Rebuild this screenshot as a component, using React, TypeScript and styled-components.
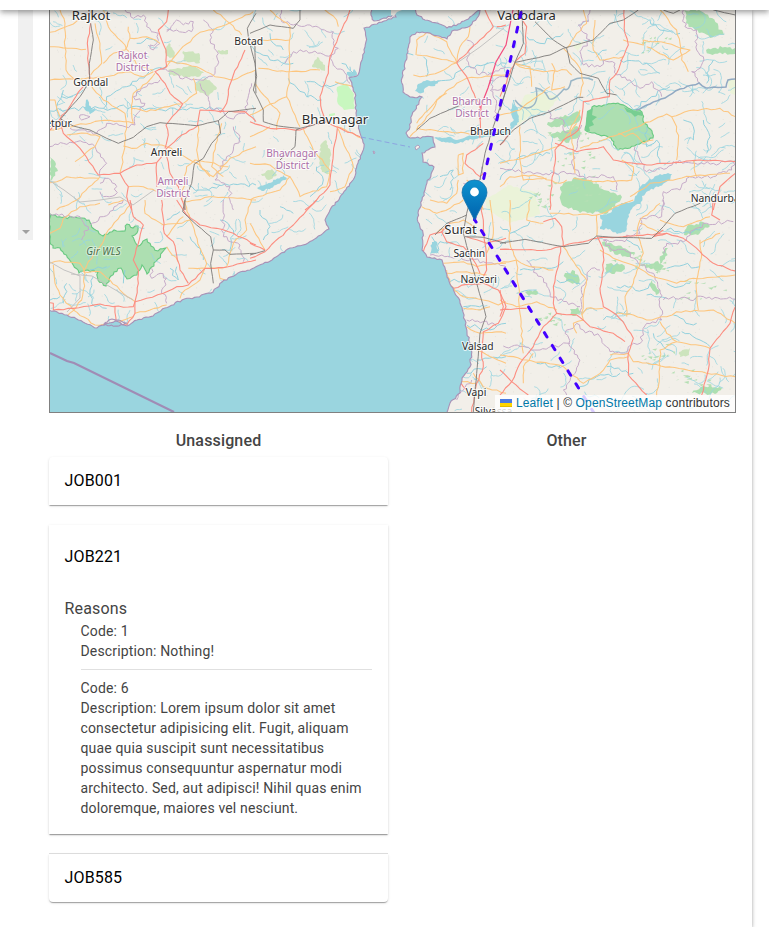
import React from "react";
import styled, { createGlobalStyle } from "styled-components";

const GlobalStyle = createGlobalStyle`
  html, body { margin: 0; background: #fff; overflow: hidden; }
  body { font-family: Roboto, sans-serif; color: #444; }
  * { box-sizing: border-box; }
`;

const Page = styled.div`
  height: 927px;
  width: 769px;
  display: flex;
  flex-direction: column;
  overflow: hidden;
`;

const TopBar = styled.header`
  position: relative;
  z-index: 2;
  flex: 0 0 10px;
  background: #fff;
  box-shadow: 0 2px 4px -1px rgba(0, 0, 0, 0.2), 0 4px 5px 0 rgba(0, 0, 0, 0.14),
    0 1px 10px 0 rgba(0, 0, 0, 0.12);
`;

const Sheet = styled.main`
  flex: 1;
  width: 752px;
  padding-left: 18px;
  display: flex;
  align-items: flex-start;
  gap: 16px;
  background: #fff;
  box-shadow: 0 2px 1px -1px rgba(0, 0, 0, 0.2), 0 1px 3px 0 rgba(0, 0, 0, 0.24),
    0 1px 5px 0 rgba(0, 0, 0, 0.16);
`;

const ScrollTrack = styled.div`
  width: 15px;
  height: 230px;
  padding-bottom: 6px;
  display: flex;
  align-items: flex-end;
  justify-content: center;
  background: #f0f0f0;
`;

const ScrollArrow = styled.div`
  border: 4px solid transparent;
  border-top-color: #a0a0a0;
  border-bottom: 0;
`;

const Content = styled.div`
  width: 687px;
`;

const MapFrame = styled.div`
  position: relative;
  height: 403px;
  border: 1px solid #808080;
  border-top: 0;
  overflow: hidden;
`;

const MapCanvas = styled.svg`
  display: block;
  width: 685px;
  height: 402px;
  font-family: "Noto Sans", sans-serif;
`;

const Attribution = styled.div`
  position: absolute;
  right: 0;
  bottom: 0;
  padding: 0 5px;
  background: rgba(255, 255, 255, 0.8);
  color: #333;
  font: 12px/17px "Liberation Sans", Arial, sans-serif;
  letter-spacing: 0.14px;
  white-space: pre;
`;

const AttributionLink = styled.a`
  color: #0078a8;
`;

const Flag = styled.svg`
  width: 12px;
  height: 8px;
  margin-right: 4px;
`;

const Columns = styled.div`
  display: grid;
  grid-template-columns: 339px 339px;
  column-gap: 9px;
  padding-top: 15px;
`;

const ColumnTitle = styled.h2`
  margin: 0 0 4px;
  height: 25px;
  font-size: 16px;
  line-height: 25px;
  font-weight: 500;
  letter-spacing: 0.15px;
  text-align: center;
`;

const Card = styled.section<{ $top?: boolean; $bottom?: boolean; $ruled?: boolean }>`
  position: relative;
  background: #fff;
  padding: 0 16px 0 15.5px;
  border-radius: ${(p) => (p.$top ? "4px 4px" : "0 0")} ${(p) => (p.$bottom ? "4px 4px" : "0 0")};
  box-shadow: 0 2px 1px -1px rgba(0, 0, 0, 0.2), 0 1px 1px 0 rgba(0, 0, 0, 0.14),
    0 1px 3px 0 rgba(0, 0, 0, 0.12);
  & + & { margin-top: 20px; }
  &::before {
    content: "";
    display: ${(p) => (p.$ruled ? "block" : "none")};
    position: absolute;
    inset: -1px 0 auto;
    height: 1px;
    background: #dcdcdc;
  }
`;

const CardTitle = styled.div<{ $open?: boolean }>`
  height: ${(p) => (p.$open ? 64 : 48)}px;
  display: flex;
  align-items: center;
  color: #000;
  font-size: 16px;
  line-height: 24px;
  letter-spacing: 0.15px;
`;

const Details = styled.div`
  padding: 8px 0 16px;
`;

const DetailsTitle = styled.div`
  font-size: 16px;
  line-height: 24px;
  letter-spacing: 0.15px;
`;

const Reason = styled.div`
  margin-left: 16px;
  font-size: 14px;
  line-height: 20px;
  letter-spacing: 0.01071em;
  & + & {
    margin-top: 8px;
    padding-top: 8px;
    border-top: 1px solid #e0e0e0;
  }
`;

/* ---- Map geometry ---- */

type Pt = [number, number];

const parse = (s: string): Pt[] => s.trim().split(/\s+/).map((p) => p.split(",").map(Number) as Pt);

const random = (seed: number) => {
  let a = seed;
  return () => {
    a = (a * 1664525 + 1013904223) % 4294967296;
    return a / 4294967296;
  };
};

/** Subdivides a polyline and displaces the new vertices to give it a natural edge. */
const rough = (src: string, amp: number, step: number, seed: number, close = false) => {
  const r = random(seed * 977 + 13);
  const pts = parse(src);
  if (close) pts.push(pts[0]);
  let d = `M${pts[0]}`;
  for (let i = 1; i < pts.length; i++) {
    const [x0, y0] = pts[i - 1];
    const [x1, y1] = pts[i];
    const len = Math.hypot(x1 - x0, y1 - y0) || 1;
    const n = Math.max(1, Math.round(len / step));
    for (let k = 1; k <= n; k++) {
      const o = k === n ? 0 : (r() - 0.5) * 2 * amp;
      const t = k / n;
      d += `L${(x0 + (x1 - x0) * t - ((y1 - y0) / len) * o).toFixed(1)},${(y0 + (y1 - y0) * t + ((x1 - x0) / len) * o).toFixed(1)}`;
    }
  }
  return close ? d + "Z" : d;
};

const WEST_COAST =
  "371,8 371,15 374,21 384,18 395,15 396,17 384,21 377,24 364,28 366,37 365,47 362,60 358,75 349,78 355,93 356,113 360,133 364,147 358,163 353,180 340,197 330,210 325,220 329,229 308,243 290,248 272,260 250,270 240,272 222,282 213,292 197,297 182,300 165,308 153,316 137,320 127,326 115,321 104,325 97,328 83,322 67,315 49,310";
const EAST_COAST =
  "447,414 450,403 460,393 462,378 470,367 472,347 467,333 465,320 460,303 453,288 447,277 442,260 427,257 422,250 423,233 418,222 418,213 422,200 427,183 434,167 423,162 422,153 435,147 433,137 410,138 406,133 410,127 412,115 422,97 410,97 403,92 402,78 407,57 410,37 417,32 430,33 447,39 452,31 462,28 470,26 477,18 481,8 474,14 466,20 458,24 447,28 437,23 425,20 417,15 414,8";

interface Layer {
  x: number;
  y: number;
  minor: string[];
  major: string[];
  rail: string[];
  border: string[];
  water: string[];
}

/* Each sector holds its lines at three units per map pixel. */
const SECTORS: Layer[] = [
  {
    x: 0, y: 0,
    minor: [
      "180,30 195,70 195,140 198,210 225,240", "150,97 220,72 280,30", "150,140 215,145 258,148", "285,70 300,130 305,190 272,225",
      "310,30 325,80 375,135 410,195 460,210", "310,190 340,160 375,150 390,115 385,80", "390,115 440,110 480,130", "500,200 540,150 600,97 640,90 690,68 760,35",
      "640,30 690,70 725,105", "500,185 545,190 590,200 645,230 700,240 768,210", "460,215 430,230 380,215 330,228 280,235 150,240", "272,255 310,300 375,340 380,372 365,500 360,518",
      "395,330 400,280 440,250 465,220", "550,310 590,280 580,235", "150,390 215,380 300,362 372,365 400,370 395,325 440,335 545,312", "200,405 260,400 300,410 285,440 225,485",
      "370,438 410,445 440,430 500,440 590,490 640,530 690,475 768,440", "595,375 590,450 600,500 630,530", "665,370 640,460 635,500 670,530", "150,548 170,545 200,530 295,535",
      "300,530 285,545 230,600 170,630", "545,600 560,500 585,480 685,500", "550,605 640,590 768,600", "385,560 430,560 470,575", "150,300 165,300 180,350",
    ],
    major: [
      "272,70 262,130 265,190 270,235 245,265 212,315 180,357 150,390", "180,357 190,400 240,445 295,525 360,520 410,495 470,488 500,445 545,405 592,378 600,330 660,335 735,335 768,365",
      "505,30 500,65 475,90 485,120 498,150 500,200 465,215 495,250 510,280 548,312 498,375 505,405 495,445", "360,520 385,560 380,590 395,630", "500,470 510,520 535,560 550,610 555,630",
      "735,150 700,225 685,270 680,310 660,337", "470,488 470,560",
    ],
    rail: [
      "272,70 280,120 268,190 268,245 240,290 182,357", "182,357 220,378 270,390 320,415 355,430 400,412 440,380 480,368 590,377 655,362 685,335 768,325", "655,362 662,400 635,430 610,475 583,492 575,550 555,600 555,630",
      "768,40 742,85 745,110 765,140 768,280",
    ],
    border: [
      "375,30 400,55 430,45 440,80 475,100 470,130 450,135 460,150 480,130", "500,90 530,60 550,75 580,65 575,95 530,90 500,95", "610,60 640,90 630,120 655,160 645,220 600,240 540,235 520,215 480,205", "600,250 625,290 630,325 670,330 690,355 735,340 755,250",
      "480,240 440,260 400,290 435,310 408,345 405,375 375,380 350,370 320,370 290,400 210,385", "150,440 190,430 230,425 285,440 320,490 300,510 300,530", "700,380 720,410 700,450 680,470 660,500 645,540 690,560 690,600 700,630", "240,345 270,350 245,360 240,345",
      "300,550 325,535 350,560 345,585 310,590 300,575",
    ],
    water: ["150,333 200,330 260,325 310,325 395,320 460,325 560,330 665,325", "310,325 320,290 380,260 440,225 500,195", "190,270 170,320 175,350", "640,550 700,552 768,555", "540,545 600,570 660,555", "260,300 270,340 285,325", "410,130 440,115 470,125", "250,270 200,295 185,290"],
  },
  {
    x: 250, y: 0,
    minor: [
      "60,30 120,80 118,250 110,290 0,345", "0,120 120,120", "25,205 110,215 210,210", "15,250 60,310 90,340 80,390", "110,290 140,360 150,380", "225,30 260,60 265,80", "255,245 310,260", "260,380 290,450 310,500 285,560 240,575",
      "498,165 500,120 530,97 590,125 620,188 560,175 500,165", "620,188 570,215 510,230 490,225", "620,188 630,140 655,110 660,80", "500,385 580,395 700,405", "500,370 560,300 620,250 650,235 768,225", "480,410 540,340 570,290 590,280",
      "0,490 60,495 120,530 90,570 0,600", "120,530 150,590 230,560 240,510 190,450 160,385", "540,600 590,610 620,580 625,540", "625,465 640,460 640,520 625,525 625,465", "650,540 690,580 700,630", "0,410 60,380",
      "260,380 310,400 335,415",
    ],
    major: [
      "300,30 290,60 265,110 240,170 235,220 210,290 215,330 230,365", "0,365 60,385 150,390 180,375 230,365 280,390 330,410", "262,385 250,460 240,555 200,600 165,630", "705,30 730,80 680,130 620,188", "768,75 740,80",
      "700,430 650,465 645,490 690,530 700,520", "620,188 650,230 690,320 690,415",
    ],
    rail: ["150,30 150,60 130,85 60,75 0,100", "0,130 15,190 20,230 10,270 40,330 40,365 85,378 150,385 230,365", "150,385 138,390 135,440 90,480", "500,390 540,355 620,320 690,295", "768,270 730,380 705,460 690,540"],
    border: [
      "95,30 95,65 130,75 180,75 250,95 250,130 265,145 245,165 160,155 130,155 105,190", "245,165 250,195 290,225 300,250", "650,120 670,130 650,180 680,220 730,220 768,200", "768,230 720,240 725,270 768,260", "720,270 740,310 735,360", "695,500 690,540 640,550",
    ],
    water: ["0,135 60,180 130,190", "115,235 170,290 215,300", "170,245 240,260 290,240", "60,100 70,130 100,150", "275,190 310,220 300,200", "470,160 490,165", "530,230 530,180 520,170", "550,250 600,240 640,210 680,195 768,190", "570,530 610,510 600,570", "200,500 220,540 180,590"],
  },
  {
    x: 500, y: 0,
    minor: [
      "285,60 280,150 300,180 370,170", "200,145 230,100 260,70 250,30", "190,145 240,205 250,250 240,290", "45,190 90,200 95,260", "45,190 75,205 130,215 200,210 215,225", "155,190 165,210 155,270 195,260", "370,120 430,135 430,120 500,130 570,150 520,180 440,140",
      "480,30 530,90 540,130 545,180 565,215", "0,345 60,330 150,260", "60,380 60,480 70,540 140,535", "0,490 70,475 110,460 170,440", "175,440 230,370", "240,330 210,390 220,440 225,520", "240,445 330,410 400,385 500,342 515,350 530,380 535,420 530,480", "515,350 580,330 660,325 706,350",
      "355,400 375,410 400,400 430,430 460,420", "365,480 400,500 395,540 280,545 220,535", "0,560 30,530 100,525 180,550 200,540", "580,480 590,530", "390,590 450,550 600,525 690,520",
    ],
    major: [
      "50,30 80,80 75,160 45,185 30,220 0,290", "372,30 375,100 385,135 350,220 330,240 328,290 250,305 245,355 235,390 190,420 165,450 165,490 155,545 150,630", "165,430 230,455 310,440 340,480 440,495 500,490 600,480 706,485", "706,520 660,560 640,630", "0,435 30,400",
    ],
    rail: ["105,65 160,120 200,145 210,190 240,220 295,235 320,280 350,285", "45,187 150,165 190,145 280,120 330,70 370,60 415,30", "65,30 70,130 45,187 0,330", "0,435 40,390 90,355 150,335 190,315 235,292 250,292", "490,30 520,40 540,30", "640,30 706,45"],
    border: [
      "270,30 265,65 235,75 270,120 240,155 250,195 300,200 310,180 345,190 350,225 390,240 420,265 455,245 485,290", "550,30 555,80 590,90 590,150 610,170 600,205 575,215 600,250", "145,330 150,355 190,360 190,390 215,400 245,375", "240,405 215,490 240,530 210,520 120,520 0,505",
      "405,440 420,480 440,515 500,505 520,485 640,490 700,485 695,510 640,530 560,535 540,570 490,575 490,630", "240,530 340,530 350,570",
    ],
    water: ["0,400 50,370 40,300", "80,110 120,130 190,100", "290,170 320,150", "350,285 400,330 455,290 510,260", "450,60 480,90 540,100", "440,380 440,440 470,420 480,490", "610,360 630,410 620,460", "0,540 60,470 150,460", "640,180 620,220 620,250", "360,180 440,190 480,220", "550,360 580,380 580,420"],
  },
  {
    x: 0, y: 200,
    minor: [
      "150,100 180,85 190,55 240,20 300,10", "325,90 390,15", "150,190 180,182 240,190 255,220 250,270 245,300 200,350", "160,195 165,250 180,285 220,330 285,375 340,370 400,350", "330,240 370,280 405,305", "435,0 435,40 490,75 545,70 570,60 555,10",
      "500,110 530,70 550,50", "570,60 600,145 620,190 600,240 545,280 540,295", "565,205 620,205 680,200", "680,200 700,130 740,90 735,60 755,0", "405,340 450,330 500,315", "655,205 660,235 690,245",
      "535,185 500,140", "325,15 370,0", "325,90 300,140 265,185 250,215 300,215 330,240",
    ],
    major: [
      "390,0 400,50 430,75 415,130 400,180 415,210 415,250 405,305 400,320 340,320 300,312 220,325 160,330 160,310 150,308", "345,320 348,370 380,375 405,340 405,305 440,295 490,280 530,260 565,255 615,205 670,203 768,180", "485,0 493,100 520,125 530,165 540,210 565,250", "530,0 560,45 600,75 650,85 700,100 768,135",
    ],
    rail: ["555,0 548,35 590,75 632,110 640,150 632,190 640,250", "640,150 675,150 690,163 768,160"],
    border: ["270,75 310,50 370,0", "150,42 240,50 265,80 245,120", "455,205 455,235 480,220 500,235 485,270 500,310", "670,0 670,110 720,135 730,185"],
    water: ["150,300 180,290", "280,230 270,270 275,310 320,325", "510,205 535,240 530,200", "375,210 370,250", "200,250 190,310", "320,200 270,210", "570,110 610,170 610,180", "660,60 700,90 690,150", "540,35 500,60"],
  },
  {
    x: 250, y: 200,
    minor: [
      "0,70 45,150", "515,20 560,40 600,25 640,0", "560,100 600,70 640,60 680,80", "580,190 640,185 680,200 768,190", "590,220 650,215 710,225", "610,270 640,290 700,300 745,315 768,305", "640,325 690,330 720,320", "650,380 690,400 740,395 768,400", "660,440 768,490", "670,520 700,560 768,580", "610,540 680,550",
      "720,0 730,100 710,160", "590,210 600,255 615,270",
    ],
    major: ["200,0 130,75 45,155 0,175", "0,130 45,150", "690,0 700,60 705,130 710,210 700,230", "600,70 575,95 590,125 640,140 670,180 690,220", "610,265 650,253 700,250 745,270 768,320 745,370 700,395 695,460 700,500 680,550 665,636", "520,155 540,105 580,95", "650,110 710,130 768,115", "650,515 630,545 650,570"],
    rail: ["660,0 650,40 640,100 670,210 708,350 690,400 680,520 670,636", "645,110 700,112 768,130", "555,105 590,70 650,45", "0,165 45,152"],
    border: ["540,165 620,170 700,185 768,200", "650,360 700,365 740,380", "665,540 640,570 620,600"],
    water: ["565,160 545,110", "560,160 570,125 610,130", "600,245 640,240 690,225", "640,320 700,315", "650,375 720,390 768,370", "670,430 720,450", "680,480 768,470", "30,30 60,80 40,120", "90,20 130,40", "650,520 710,500"],
  },
  {
    x: 500, y: 200,
    minor: [
      "30,0 30,130 50,190 60,340 70,460", "90,0 80,60 130,70", "0,190 50,180 90,200 160,210", "150,40 290,45 290,110", "290,45 400,0", "190,140 230,200 260,240 245,340", "300,150 340,175 410,200 460,230", "0,300 50,320 110,305 170,330", "415,110 430,160 400,250 375,290 380,350", "480,10 420,60 410,110",
      "420,70 480,100", "460,230 530,250 580,235 706,225", "600,120 605,160 590,240 595,330", "350,340 400,345 440,360 500,350 530,335 640,330 706,370", "480,365 500,400 530,425 630,445", "530,425 480,450 480,500 470,590", "0,465 80,480 190,500 210,520 250,550 300,520 330,480 385,470",
      "245,340 250,360 220,370 230,400", "330,465 385,460 400,485 620,520 706,530", "245,345 260,325 310,325", "480,60 550,80 630,50", "600,130 660,100", "100,460 70,500 70,550",
    ],
    major: [
      "0,148 140,150 180,140 290,115 400,108 500,100 550,115 600,155 640,190 706,213", "190,140 185,80 165,55 130,65", "182,140 175,200 160,260 160,310 170,340 130,380 100,440 60,490 35,545 0,585", "292,110 310,150 310,210 300,265 310,320 350,345 375,375 400,415 385,460 385,525 440,585", "170,340 230,345 270,380 340,400 375,425",
      "500,100 460,110 490,90", "640,0 635,45 660,60", "706,320 690,370 630,445 625,510 605,585", "0,510 35,545 85,585", "0,350 10,320 0,270", "0,330 80,325",
    ],
    rail: ["0,130 75,118 190,140 265,130 290,108 345,112 455,115 490,80 525,40 600,10"],
    border: [
      "490,0 485,50 420,55 420,100 380,105 375,125 310,120 330,145 380,155 410,180 465,230 480,270 485,360 440,370 420,430 385,440 380,460 330,455 300,410 250,390 230,370 195,400 210,440 240,480 225,520 190,570 200,585",
      "490,160 500,130 550,125 580,90 620,70 700,65", "490,300 520,290 570,300 610,290 706,298", "80,180 110,220 140,250 150,290 240,320", "10,438 60,440 120,450 210,430", "245,340 245,260 275,205 300,210",
    ],
    water: ["60,210 140,205 190,185", "0,80 30,100 90,65", "500,90 560,95 600,90", "500,205 550,195 600,200", "500,250 540,260 570,250", "440,285 500,295", "545,395 600,420 630,440", "460,400 490,440 520,455", "520,345 580,375 590,370", "350,260 430,270 450,250", "310,360 380,330", "50,280 110,270", "240,560 290,530 360,520", "320,500 400,520", "180,500 110,490", "170,240 240,250", "380,120 420,150"],
  },
];

const FORESTS = [
  { s: "50,214 57,217 80,218 89,220 94,229 103,236 114,230 125,231 127,224 133,228 138,226 137,233 132,236 138,246 147,239 151,246 158,251 166,248 158,259 147,274 142,265 137,275 127,279 121,268 114,272 106,286 98,280 98,272 88,270 79,273 72,263 60,248 53,248 50,242", edge: true },
  { s: "592,107 618,103 630,109 642,112 643,121 652,131 653,138 630,148 618,150 611,138 592,133 585,130 587,119", edge: true },
  { s: "50,157 56,164 58,171 50,181", edge: false },
  { s: "684,10 699,10 712,18 724,35 710,38 695,30 686,23", edge: false },
  { s: "706,50 725,47 735,48 735,54 710,54", edge: false },
  { s: "560,187 575,177 590,180 604,190 622,197 608,213 580,213 562,205", edge: false },
  { s: "548,122 563,117 580,112 580,120 567,126 549,126", edge: false },
  { s: "550,135 568,130 577,126 582,134 566,143", edge: false },
  { s: "565,273 575,271 579,277 577,285 566,281", edge: false },
  { s: "602,242 623,248 635,252 630,257 610,252", edge: false },
  { s: "606,264 622,264 625,269 612,274 605,273", edge: false },
  { s: "646,264 658,261 664,266 658,271 646,268", edge: false },
  { s: "687,226 703,222 710,226 698,235 684,235", edge: false },
  { s: "662,252 668,248 665,259 660,264", edge: false },
  { s: "652,280 660,290 656,295 650,286", edge: false },
  { s: "525,292 535,290 538,294 529,296", edge: false },
  { s: "570,309 578,307 581,312 573,316", edge: false },
  { s: "692,393 703,386 722,388 715,394", edge: false },
];

const WOODS = [
  "165,51 169,43 174,51 174,58 166,56", "183,51 199,53 200,63 184,61", "168,70 195,66 204,73 197,77 170,75", "195,84 206,78 217,88 209,96 195,90", "217,51 228,50 228,54 220,54",
  "321,144 326,140 331,153 329,174 322,172 319,159", "261,174 272,169 277,175 269,180", "312,67 317,57 325,65 325,71", "679,352 690,348 689,355 680,357",
];

const LIGHT = ["337,87 347,84 354,94 354,109 344,110 338,104", "515,115 525,95 540,92 559,97 549,110 530,116 518,126", "485,200 508,185 535,192 540,214 510,223 488,210", "329,114 335,113 335,115 329,116", "573,45 583,41 578,52", "728,80 735,79 735,95 730,93"];

const LAKES = [
  "614,207 624,203 632,202 637,195 641,186 648,181 660,174 672,174 670,180 660,186 648,191 642,196 641,202 633,207 630,213 627,222 626,231 617,234 610,229 600,229 602,222 600,215 610,213",
  "84,108 87,99 91,109 97,110 90,114", "257,188 267,184 284,175 287,179 276,185 264,191",
  "415,91 418,84 425,81 440,81 435,86 427,87 422,93", "434,138 448,137 457,140 468,136 490,133 510,131 510,134 490,136 470,139 455,144 440,141", "432,242 437,242 438,252 430,254",
  "513,102 518,110 519,122 514,127 511,130 510,125 514,120 511,110", "347,72 353,73 354,69 357,75 349,78",
];

const LABELS: [string, number, number, number, string?][] = [
  ["Rajkot", 91, 20, 13.1], ["Vadodara", 526.5, 20, 13], ["Botad", 248.7, 45, 10.3], ["Gondal", 90.8, 86, 10.3], ["Jetpur", 57, 127, 10.3],
  ["Amreli", 166.5, 156, 10.3], ["Bhavnagar", 335, 123.5, 13], ["Bharuch", 490.5, 135, 10.3], ["Surat", 460.5, 233.7, 13], ["Sachin", 469.3, 257, 10.3],
  ["Navsari", 478.7, 282.5, 10.3], ["Valsad", 477.8, 350, 10.3], ["Vapi", 476, 396, 10.3], ["Silvassa", 493.5, 414.5, 10.3], ["Nandurbar", 717.3, 202, 10.3],
  ["Rajkot", 132.5, 59, 10.1, "#ac6fa8"], ["District", 132.5, 71, 10.1, "#ac6fa8"], ["Amreli", 173, 185, 10.1, "#ac6fa8"], ["District", 173, 197, 10.1, "#ac6fa8"],
  ["Bhavnagar", 292, 157, 10.1, "#ac6fa8"], ["District", 292.5, 169, 10.1, "#ac6fa8"], ["Bharuch", 472, 105, 10.1, "#ac6fa8"], ["District", 472, 117, 10.1, "#ac6fa8"],
];

/** Short seasonal streams spread across the land. */
const streams = () => {
  const r = random(4242);
  let d = "";
  for (let i = 0; i < 700; i++) {
    let x = 45 + r() * 690;
    let y = 8 + r() * 405;
    if (x > 360 && x < 405) continue;
    let a = (x > 430 ? 0.1 : 0.7) + (r() - 0.5) * 2.2;
    d += `M${x.toFixed(1)},${y.toFixed(1)}`;
    const n = 3 + Math.floor(r() * (x > 480 ? 9 : 5));
    for (let k = 0; k < n; k++) {
      a += (r() - 0.5) * 1.3;
      x += Math.cos(a) * 2.6;
      y += Math.sin(a) * 2.6;
      d += `L${x.toFixed(1)},${y.toFixed(1)}`;
    }
  }
  return d;
};

const specks = () => {
  const r = random(99);
  let d = "";
  for (let i = 0; i < 1500; i++) d += `M${(50 + r() * 685).toFixed(1)},${(10 + r() * 402).toFixed(1)}h1`;
  return d;
};

const scrub = () => {
  const r = random(731);
  const spots = [[575, 190, 30], [565, 130, 22], [575, 160, 18], [655, 352, 18], [685, 380, 22], [650, 270, 18], [625, 255, 18], [550, 320, 14], [700, 290, 24], [655, 45, 16], [540, 200, 15]];
  return spots.flatMap(([cx, cy, s]) =>
    Array.from({ length: 14 }, () => {
      const x = cx + (r() - 0.5) * 2 * s;
      const y = cy + (r() - 0.5) * s;
      return `M${x.toFixed(1)},${y.toFixed(1)}l${(2 + r() * 4).toFixed(1)},${(-r() * 2).toFixed(1)}l${(-r() * 2).toFixed(1)},${(1 + r() * 2).toFixed(1)}z`;
    })
  ).join("");
};

type LineKind = "minor" | "major" | "rail" | "border" | "water";

const Lines = ({ kind, color, width, amp, step }: { kind: LineKind; color: string; width: number; amp: number; step: number }) => (
  <g fill="none" stroke={color} strokeWidth={width * 3} strokeLinejoin="round">
    {SECTORS.map((s, i) => (
      <g key={i} transform={`translate(${s.x} ${s.y}) scale(0.33333)`}>
        {s[kind].map((line, k) => (
          <path key={k} d={rough(line, amp, step, i * 50 + k + 1)} />
        ))}
      </g>
    ))}
  </g>
);

const RegionMap = () => {
  const west = rough(WEST_COAST, 0.9, 2.5, 5);
  const east = rough(EAST_COAST, 0.9, 2.5, 8);
  return (
    <MapCanvas viewBox="50 10 685 402" role="img" aria-label="Map">
      <defs>
        <linearGradient id="pin" x1="0" y1="0" x2="0" y2="1">
          <stop offset="0" stopColor="#0e93cf" />
          <stop offset="1" stopColor="#0062ad" />
        </linearGradient>
      </defs>
      <rect x="49" y="9" width="690" height="406" fill="#f2efe9" />
      <path d={specks()} stroke="#e5e4de" strokeWidth="1" />
      {LIGHT.map((s, i) => <path key={i} d={rough(s, 0.8, 3, i + 3, true)} fill={i === 0 || i === 3 ? "#c8f7bf" : "#ebf3d9"} />)}
      {WOODS.map((s, i) => <path key={i} d={rough(s, 1, 2, i + 6, true)} fill="#cde4bd" />)}
      {FORESTS.map((f, i) => (
        <path key={i} d={rough(f.s, f.edge ? 1.2 : 1.7, 2.5, i + 9, true)} fill="#addfb1" stroke={f.edge ? "#69c982" : "none"} strokeWidth="1.1" />
      ))}
      <path d={scrub()} fill="#b5dfb4" />
      <path d="M585,131l2,-20l6,-3l-1,7l5,2l-5,4l2,4l-5,2l1,4zM624,107l6,3l12,2v4l-4,-1l-3,2l-4,-4l-4,-1z" fill="#77ce91" />
      <path d={streams()} fill="none" stroke="#98d4df" strokeWidth="0.8" />
      <Lines kind="water" color="#8dcfdc" width={0.95} amp={7} step={12} />
      {LAKES.map((s, i) => <path key={i} d={rough(s, 1.1, 2, i + 30, true)} fill="#99d5df" />)}
      <Lines kind="border" color="#c6abc9" width={1} amp={6} step={9} />
      <path d="M515,100Q523,111 531,107T536,88Q545,90 548,97T564,89Q569,92 571,81Q582,75 593,80" fill="none" stroke="#9bb6c6" strokeWidth="1.5" />
      <path d={rough("636,110 650,104 665,98 680,89 699,83 706,88 726,87 728,80 735,79", 0.7, 4, 60)} fill="none" stroke="#91a9c3" strokeWidth="1.5" />
      <Lines kind="minor" color="#fdc67f" width={1.05} amp={2.8} step={14} />
      <g fill="none" stroke="#c4c3c2" strokeWidth="1">
        <path d="M50,181L64,190L80,202L100,200L120,197L133,205L154,190M50,262L64,270L80,276L80,298L67,312M71,274L92,276L112,288L133,300M457,63L480,47L504,28" />
      </g>
      <Lines kind="major" color="#fc8d80" width={1.1} amp={2} step={15} />
      <path d="M513,10L506,45L496,62L488,88L481,106L480,119" fill="none" stroke="#f34c7e" strokeWidth="1.2" />
      <Lines kind="rail" color="#827f7d" width={0.95} amp={0.7} step={18} />
      <path d={`${west} L49,414 L447,414 ${east.replace("M", "L")}Z`} fill="#9ad5df" />
      <g fill="none" stroke="#a891b6" strokeWidth="1.1">
        <path d={west} />
        <path d={east} />
        <path d={rough("104,324 112,319 127,323 119,326 104,325", 0.7, 2, 18, true)} />
      </g>
      <path d="M391,10v5l3,1l3,-4l5,-2z" fill="#f2efe9" />
      <path d="M415,147l3,-2l2,2l-4,3zM373,151l2,1l-1,2z" fill="#f2efe9" stroke="#a891b6" strokeWidth="0.8" />
      <path d="M361,137L410,147" stroke="#8b9ee0" strokeWidth="0.9" strokeDasharray="5 3" />
      <path d="M50,353L67,361L74,363L174,412" fill="none" stroke="#a08cb5" strokeWidth="2.2" />

      <g textAnchor="middle" strokeLinejoin="round" stroke="#fff" strokeOpacity="0.75" strokeWidth="2.2" paintOrder="stroke">
        {LABELS.map(([text, x, y, size, color], i) => (
          <text key={i} x={x} y={y} fontSize={size} fill={color ?? "#2b2b2b"}>{text}</text>
        ))}
        <text x="103.5" y="254.5" fontSize="10" fontStyle="italic" fill="#4d6f4d" strokeOpacity="0.45">Gir WLS</text>
      </g>

      <g fill="none" stroke="#4400ff" strokeWidth="3" strokeLinecap="round" strokeDasharray="5 10">
        <path d="M521.9,8.5L474.5,219.5" strokeDashoffset="-4.15" />
        <path d="M474.5,219.5L594,413" strokeDashoffset="2" />
      </g>
      <path d="M474.5,220L464.5,200.5Q462,196 462,192.5A12.5,12.5 0 0 1 487,192.5Q487,196 484.5,200.5Z" fill="url(#pin)" stroke="#1976ac" strokeWidth="0.8" />
      <circle cx="474.5" cy="192" r="4.4" fill="#fff" />
    </MapCanvas>
  );
};

export default function App() {
  return (
    <Page>
      <GlobalStyle />
      <TopBar />
      <Sheet>
        <ScrollTrack>
          <ScrollArrow />
        </ScrollTrack>
        <Content>
          <MapFrame>
            <RegionMap />
            <Attribution>
              <Flag viewBox="0 0 12 8">
                <path fill="#4c7be1" d="M0 0h12v4H0z" />
                <path fill="#ffd500" d="M0 4h12v3H0z" />
                <path fill="#e0bc00" d="M0 7h12v1H0z" />
              </Flag>
              <AttributionLink>Leaflet</AttributionLink> | © <AttributionLink>OpenStreetMap</AttributionLink> contributors
            </Attribution>
          </MapFrame>
          <Columns>
            <div>
              <ColumnTitle>Unassigned</ColumnTitle>
              <Card $top>
                <CardTitle>JOB001</CardTitle>
              </Card>
              <Card>
                <CardTitle $open>JOB221</CardTitle>
                <Details>
                  <DetailsTitle>Reasons</DetailsTitle>
                  <Reason>
                    <div>Code: 1</div>
                    <div>Description: Nothing!</div>
                  </Reason>
                  <Reason>
                    <div>Code: 6</div>
                    <div>
                      Description: Lorem ipsum dolor sit amet consectetur adipisicing elit. Fugit, aliquam quae quia
                      suscipit sunt necessitatibus possimus consequuntur aspernatur modi architecto. Sed, aut
                      adipisci! Nihil quas enim doloremque, maiores vel nesciunt.
                    </div>
                  </Reason>
                </Details>
              </Card>
              <Card $bottom $ruled>
                <CardTitle>JOB585</CardTitle>
              </Card>
            </div>
            <div>
              <ColumnTitle>Other</ColumnTitle>
            </div>
          </Columns>
        </Content>
      </Sheet>
    </Page>
  );
}
